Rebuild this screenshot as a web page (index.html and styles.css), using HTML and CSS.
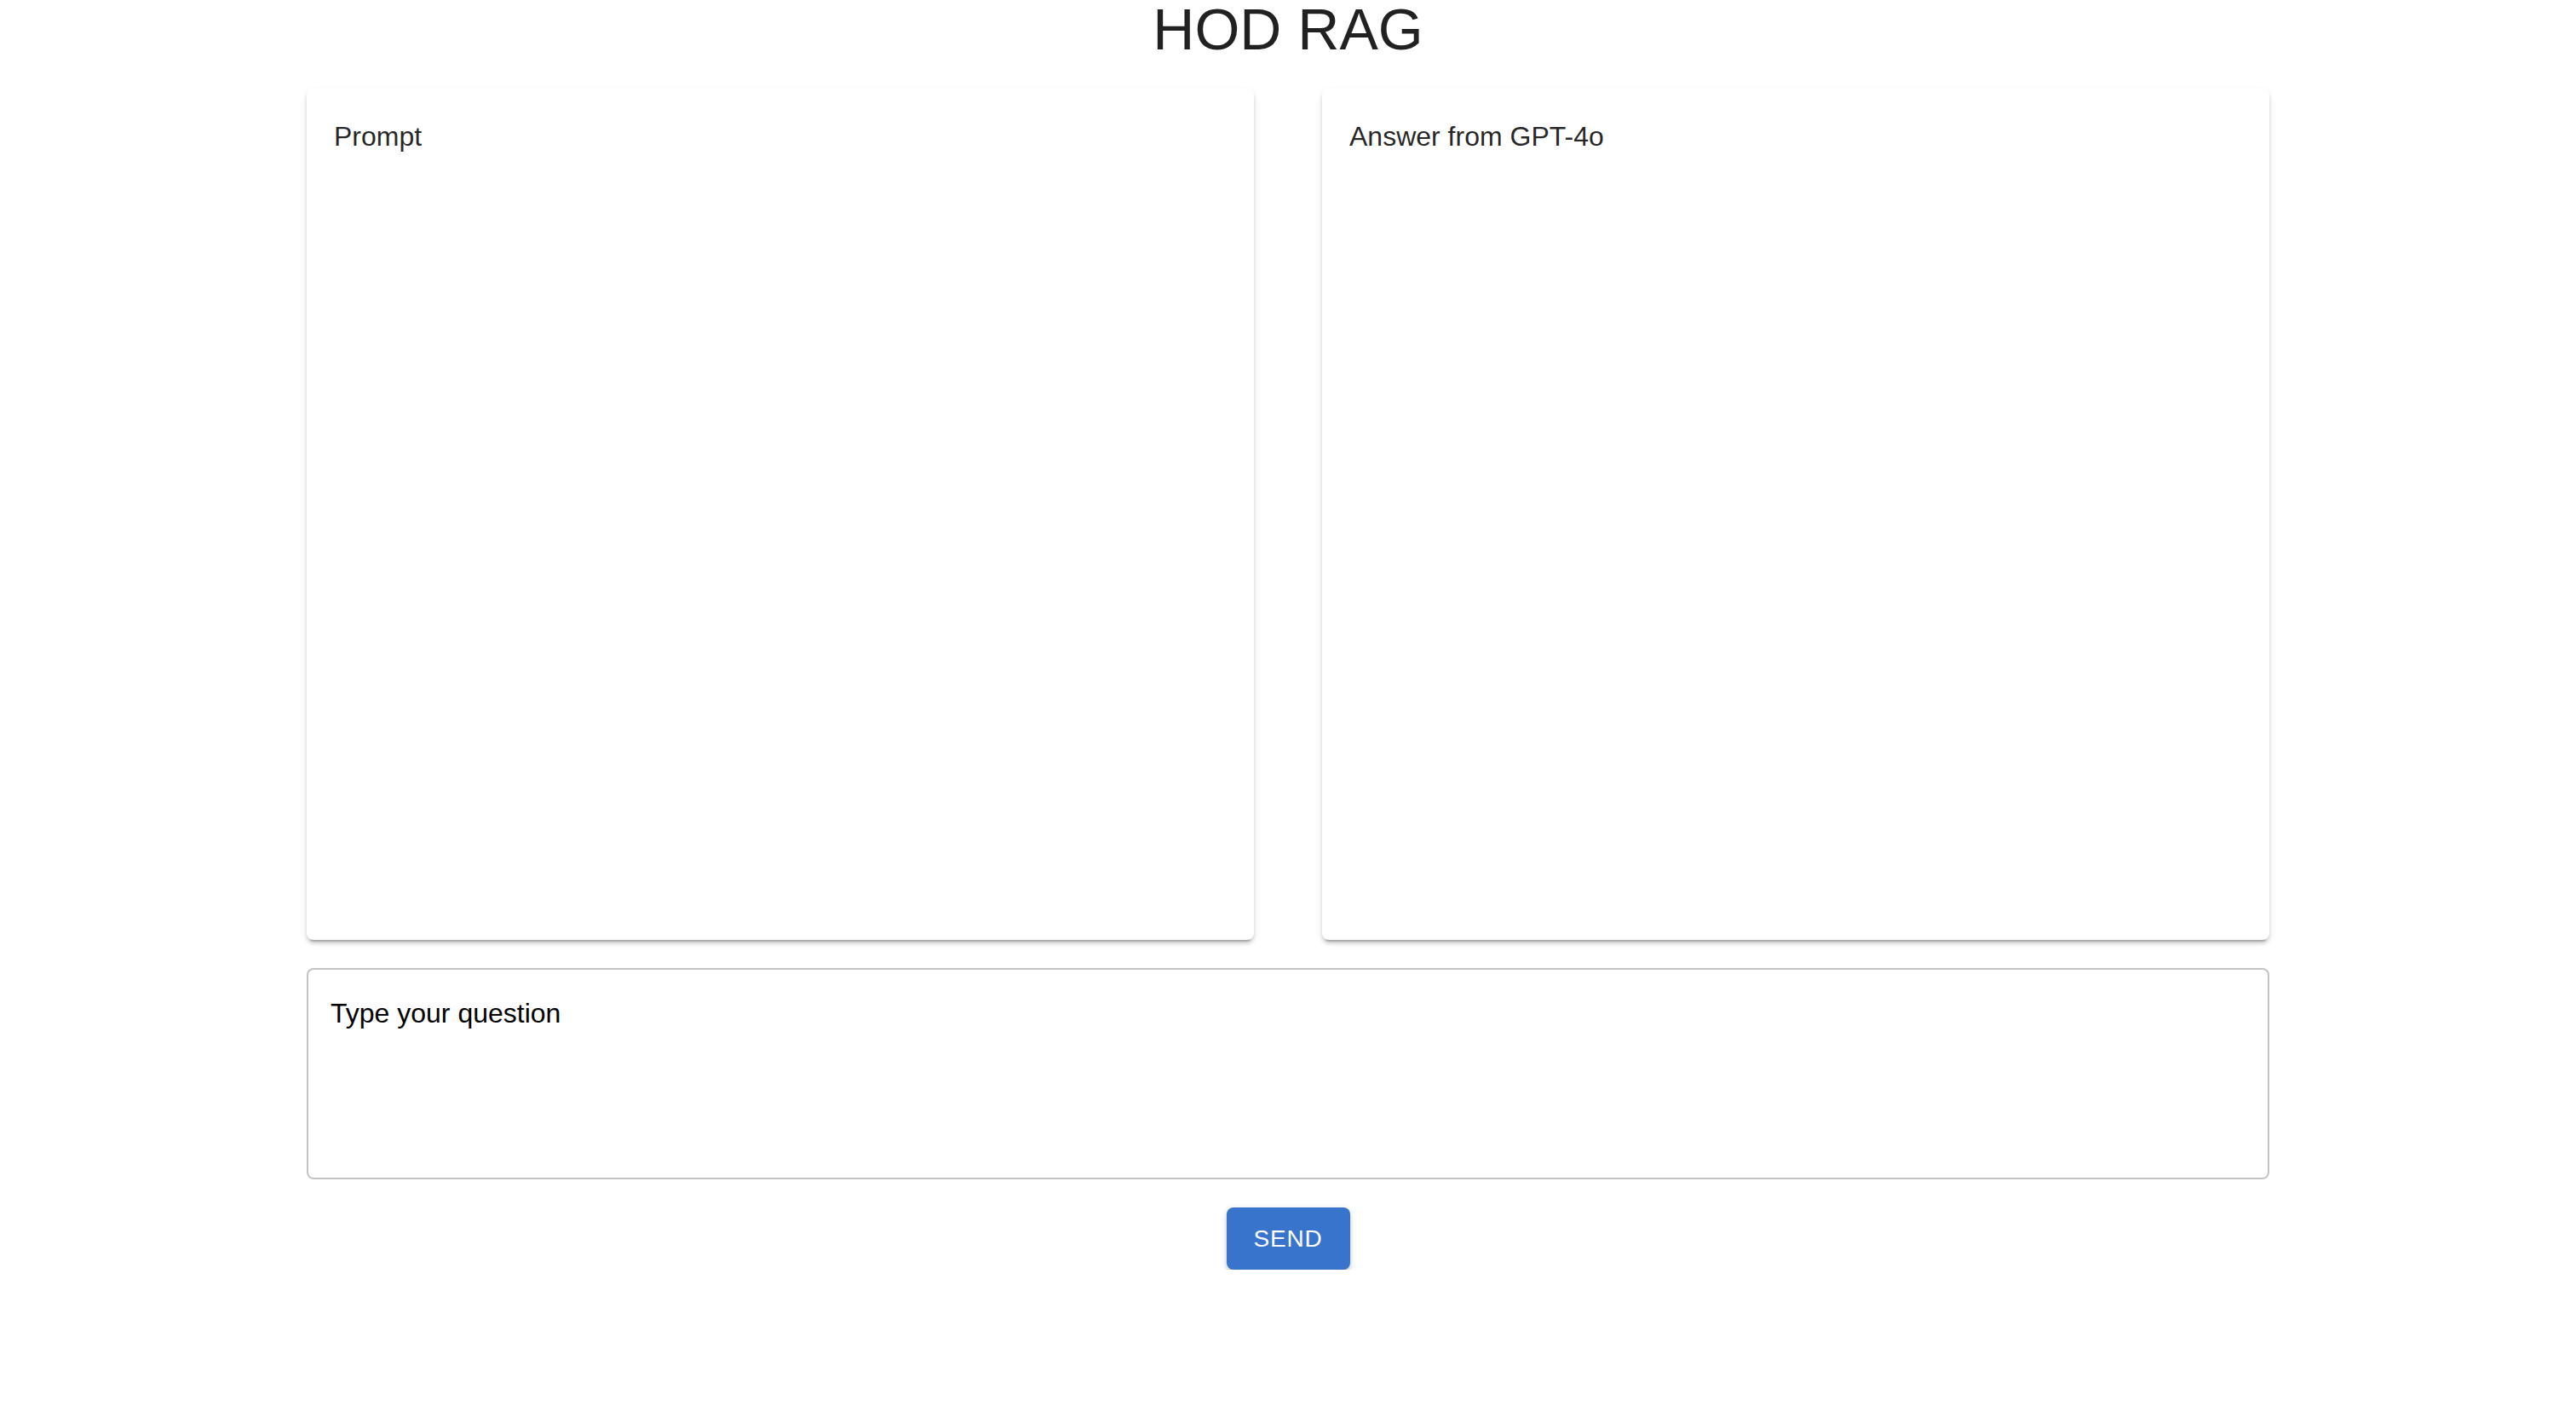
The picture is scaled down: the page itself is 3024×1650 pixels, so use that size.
FILE: index.html
```html
<!DOCTYPE html>
<html lang="en">
<head>
    <meta charset="UTF-8">
    <meta name="viewport" content="width=device-width, initial-scale=1.0">
    <title>HOD RAG</title>
    <link rel="stylesheet" href="styles.css">
</head>
<body>
    <div class="container">
        <h1 class="title">HOD RAG</h1>
        <div class="panels">
            <div class="card">
                <p class="card-label">Prompt</p>
            </div>
            <div class="card">
                <p class="card-label">Answer from GPT-4o</p>
            </div>
        </div>
        <textarea class="question" placeholder="Type your question"></textarea>
        <div class="actions">
            <button class="send-btn">Send</button>
        </div>
    </div>
</body>
</html>
```

FILE: styles.css
```css
body {
    font-family: "Liberation Sans", Arial, sans-serif;
    background-color: #fff;
    color: rgba(0, 0, 0, 0.87);
    margin: 0;
    padding: 0;
}
.container {
    max-width: 2400px;
    margin: 0 auto;
    padding: 0 48px;
    box-sizing: border-box;
}
.title {
    font-size: 68px;
    font-weight: 400;
    line-height: 84px;
    text-align: center;
    margin: -8px 0 28px;
}
.panels {
    display: grid;
    grid-template-columns: 1fr 1fr;
    gap: 80px;
}
.card {
    background: #fff;
    height: 999px;
    padding: 32px 32px 0;
    box-sizing: border-box;
    border-radius: 8px;
    box-shadow: 0 6px 2px -4px rgba(0, 0, 0, 0.2), 0 4px 4px 0 rgba(0, 0, 0, 0.14), 0 4px 10px 0 rgba(0, 0, 0, 0.08);
}
.card-label {
    margin: 0;
    font-size: 32px;
    line-height: 48px;
}
.question {
    display: block;
    width: 100%;
    height: 248px;
    margin-top: 33px;
    box-sizing: border-box;
    border: 2px solid #c4c4c4;
    border-radius: 8px;
    padding: 28px 26px;
    font-family: inherit;
    font-size: 32px;
    line-height: 46px;
    color: #000;
    resize: none;
    outline: none;
}
.question::placeholder {
    color: #000;
    opacity: 1;
}
.actions {
    display: flex;
    justify-content: center;
    margin-top: 33px;
}
.send-btn {
    height: 73px;
    padding: 0 32px;
    border: none;
    border-radius: 8px;
    background-color: #3874cb;
    color: #fff;
    font-family: inherit;
    font-size: 28px;
    letter-spacing: 0.8px;
    text-transform: uppercase;
    cursor: pointer;
    box-shadow: 0 6px 2px -4px rgba(0, 0, 0, 0.2), 0 4px 4px 0 rgba(0, 0, 0, 0.14), 0 2px 10px 0 rgba(0, 0, 0, 0.12);
}
```
